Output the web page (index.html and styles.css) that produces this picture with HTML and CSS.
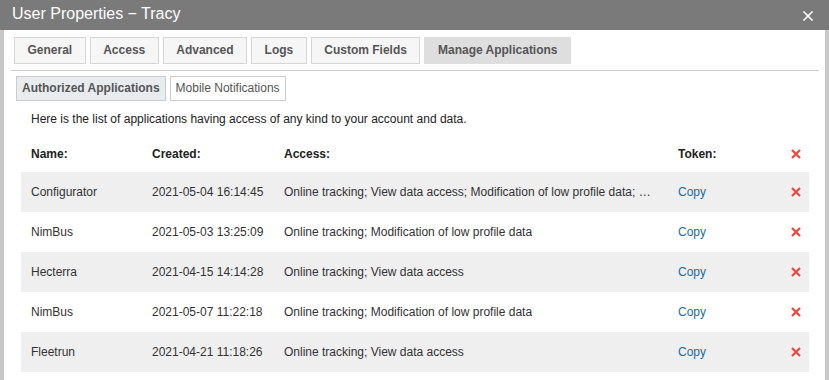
FILE: index.html
```html
<!DOCTYPE html>
<html>
<head>
<meta charset="utf-8">
<link rel="stylesheet" href="styles.css">
</head>
<body>
<div class="dialog">
  <div class="titlebar">
    <span class="title">User Properties − Tracy</span>
    <svg class="close" width="12" height="12" viewBox="0 0 12 12"><path d="M1.5 1.5L10.5 10.5M10.5 1.5L1.5 10.5" stroke="#fff" stroke-width="1.7"/></svg>
  </div>
  <div class="body">
    <div class="tabs">
      <div class="tab">General</div>
      <div class="tab">Access</div>
      <div class="tab">Advanced</div>
      <div class="tab">Logs</div>
      <div class="tab">Custom Fields</div>
      <div class="tab active">Manage Applications</div>
    </div>
    <div class="subtabs">
      <div class="subtab active">Authorized Applications</div>
      <div class="subtab">Mobile Notifications</div>
    </div>
    <p class="intro">Here is the list of applications having access of any kind to your account and data.</p>
    <div class="table">
      <div class="row head">
        <div>Name:</div><div>Created:</div><div class="access">Access:</div><div>Token:</div>
        <div class="del"><svg width="10" height="10" viewBox="0 0 10 10"><path d="M1 1L9 9M9 1L1 9" stroke="#f0463c" stroke-width="2.2"/></svg></div>
      </div>
      <div class="row">
        <div>Configurator</div><div>2021-05-04 16:14:45</div><div class="access">Online tracking; View data access; Modification of low profile data; …</div><div><a class="copy">Copy</a></div>
        <div class="del"><svg width="10" height="10" viewBox="0 0 10 10"><path d="M1 1L9 9M9 1L1 9" stroke="#f0463c" stroke-width="2.2"/></svg></div>
      </div>
      <div class="row">
        <div>NimBus</div><div>2021-05-03 13:25:09</div><div class="access">Online tracking; Modification of low profile data</div><div><a class="copy">Copy</a></div>
        <div class="del"><svg width="10" height="10" viewBox="0 0 10 10"><path d="M1 1L9 9M9 1L1 9" stroke="#f0463c" stroke-width="2.2"/></svg></div>
      </div>
      <div class="row">
        <div>Hecterra</div><div>2021-04-15 14:14:28</div><div class="access">Online tracking; View data access</div><div><a class="copy">Copy</a></div>
        <div class="del"><svg width="10" height="10" viewBox="0 0 10 10"><path d="M1 1L9 9M9 1L1 9" stroke="#f0463c" stroke-width="2.2"/></svg></div>
      </div>
      <div class="row">
        <div>NimBus</div><div>2021-05-07 11:22:18</div><div class="access">Online tracking; Modification of low profile data</div><div><a class="copy">Copy</a></div>
        <div class="del"><svg width="10" height="10" viewBox="0 0 10 10"><path d="M1 1L9 9M9 1L1 9" stroke="#f0463c" stroke-width="2.2"/></svg></div>
      </div>
      <div class="row">
        <div>Fleetrun</div><div>2021-04-21 11:18:26</div><div class="access">Online tracking; View data access</div><div><a class="copy">Copy</a></div>
        <div class="del"><svg width="10" height="10" viewBox="0 0 10 10"><path d="M1 1L9 9M9 1L1 9" stroke="#f0463c" stroke-width="2.2"/></svg></div>
      </div>
    </div>
  </div>
</div>
</body>
</html>
```
FILE: styles.css
```css
html, body {
  margin: 0;
  padding: 0;
  background: #fff;
}
body {
  font-family: "Liberation Sans", Arial, sans-serif;
  font-size: 12px;
  color: #333;
}
.dialog {
  width: 829px;
  height: 380px;
  overflow: hidden;
  display: flex;
  flex-direction: column;
}
.titlebar {
  height: 30px;
  flex: none;
  background: #7a7a7a;
  color: #fff;
  display: flex;
  align-items: center;
  justify-content: space-between;
  padding: 0 15px 0 12px;
  box-sizing: border-box;
}
.title {
  font-size: 16px;
  line-height: 28px;
  padding-bottom: 2px;
}
.close {
  display: block;
  margin-top: 1px;
}
.body {
  flex: 1;
  border-left: 4px solid #c8c8c8;
  border-right: 4px solid #c8c8c8;
  padding: 0 6px 0 7px;
}
.tabs {
  display: flex;
  gap: 4px;
  padding: 7px 0 6px 3px;
  border-bottom: 1px solid #cccccc;
}
.tab {
  height: 25px;
  line-height: 25px;
  padding: 0 12.5px;
  border: 1px solid #d6d6d6;
  background: #f6f6f6;
  color: #555;
  font-weight: bold;
  font-size: 12px;
}
.tab.active {
  background: #dedede;
  border-color: #dedede;
}
.subtabs {
  display: flex;
  gap: 4px;
  padding: 5px 0 0 5px;
}
.subtab {
  height: 23px;
  line-height: 23px;
  padding: 0 5px;
  border: 1px solid #cccccc;
  background: #fff;
  color: #555;
}
.subtab.active {
  background: #e9ecef;
  font-weight: bold;
}
.intro {
  margin: 0;
  padding: 10px 0 8px 20px;
  line-height: 17px;
  color: #222;
}
.table {
  margin: 0 10px;
}
.row {
  display: grid;
  grid-template-columns: 121px 132px 394px 1fr 26px;
  align-items: center;
  height: 40px;
  padding-left: 10px;
}
.row > div {
  white-space: nowrap;
}
.row.head {
  height: 36px;
  font-weight: bold;
  color: #222;
}
.row:nth-child(even) {
  background: #efefef;
}
.access {
  overflow: hidden;
  padding-right: 10px;
}
.copy {
  color: #1b6aa6;
  cursor: pointer;
}
.del {
  display: flex;
  justify-content: center;
}
.del svg {
  display: block;
}
```
